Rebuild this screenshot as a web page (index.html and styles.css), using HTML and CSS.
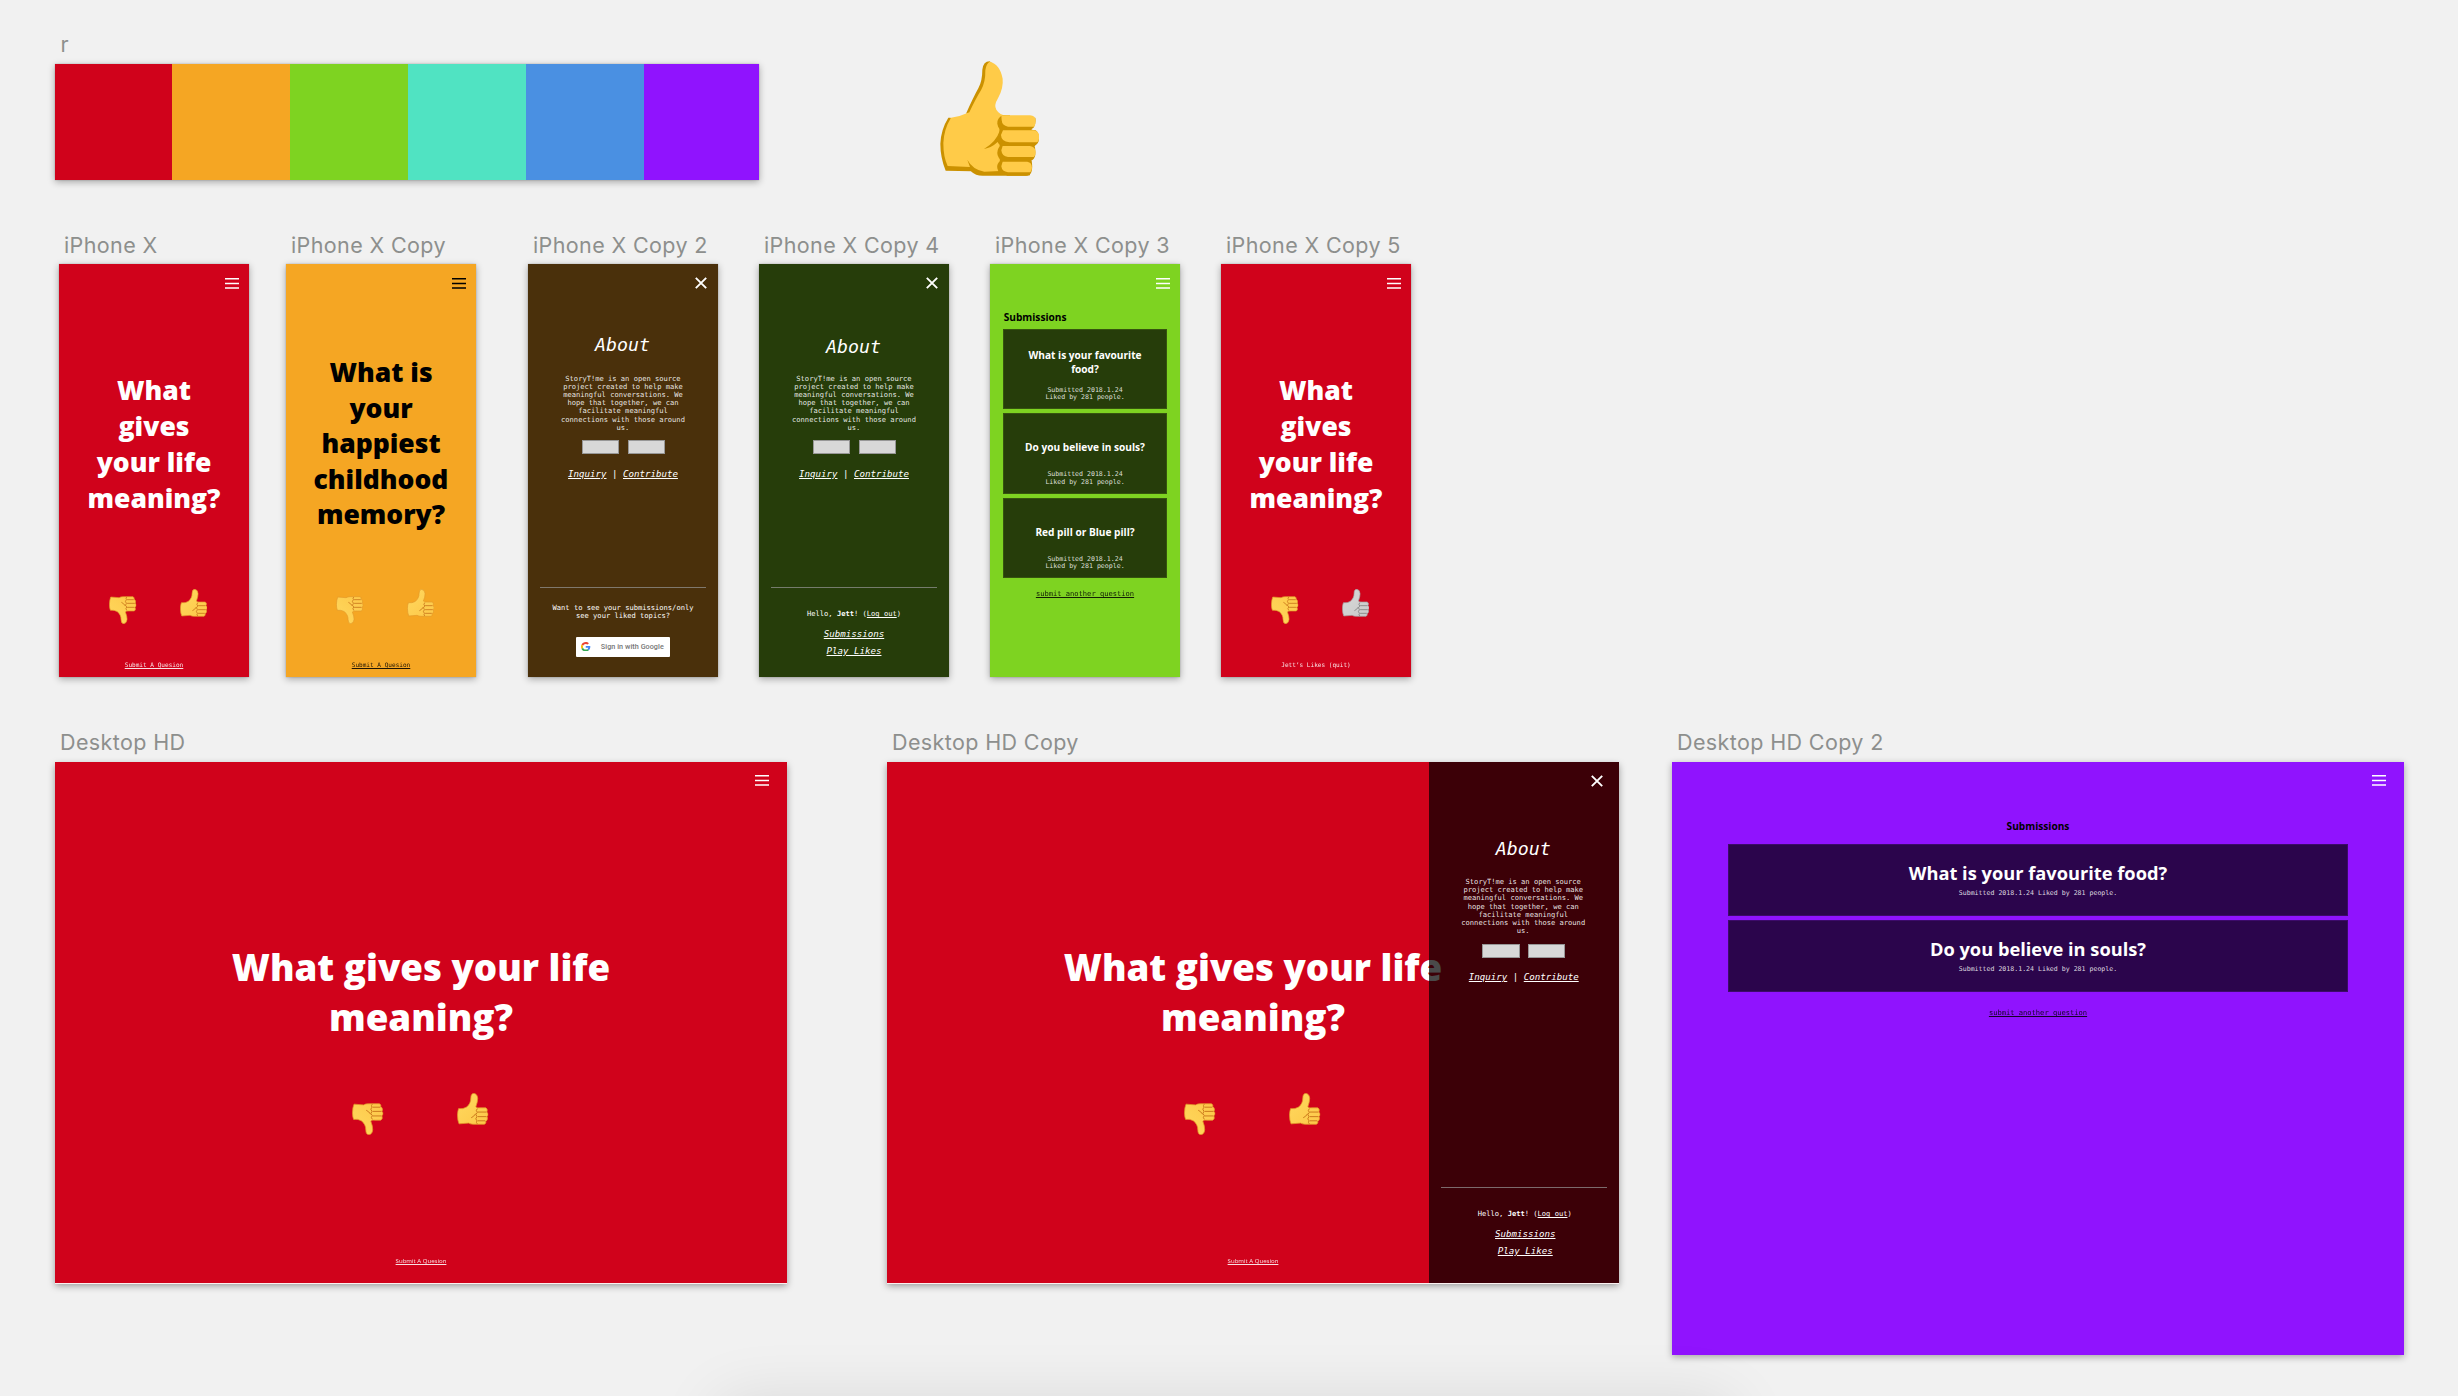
FILE: index.html
```html
<!DOCTYPE html>
<html lang="en">
<head>
<meta charset="utf-8">
<title>StoryT!me artboards</title>
<link rel="stylesheet" href="styles.css">
</head>
<body>
<svg class="defs" aria-hidden="true">
  <defs>
    <linearGradient id="skin" x1="0" y1="0" x2="1" y2="1">
      <stop offset="0" stop-color="#ffd95f"/><stop offset="1" stop-color="#fdc748"/>
    </linearGradient>
    <symbol id="menu" viewBox="0 0 14 11"><path d="M0 .8h14M0 5.4h14M0 10h14" fill="none" stroke="currentColor" stroke-width="1.5"/></symbol>
    <symbol id="close" viewBox="0 0 12 12"><path d="M.8.8l10.400 10.400M11.200.8L.8 11.200" fill="none" stroke="currentColor" stroke-width="1.9"/></symbol>
    <symbol id="thumb" viewBox="0 0 82 84">
      <path fill="url(#skin)" stroke="#e39a2a" stroke-width="2" d="M4 41Q15 43 25 37C32 30 36 24 36 13Q36 1 44 1Q53 2 54 14Q54 24 49 36Q51 40 60 39L75 39Q80 41 79 46Q79 49 77 50Q82 52 81 57Q81 61 78 62Q81 65 79 70Q78 73 75 74Q77 79 72 82L42 82Q35 82 30 79L5 81Q1 72 1 58Q1 48 4 41Z"/>
      <path fill="none" stroke="#c9761a" stroke-width="2.500" d="M54 50H76M54 62H77M54 73H74M53 41Q48 46 53 51Q46 56 52 62Q46 68 52 73Q49 78 53 81M49 54Q44 62 37 65"/>
    </symbol>
  </defs>
</svg>
<main class="canvas">

  <section class="item palette-item">
    <h2 class="label">r</h2>
    <div class="board palette">
      <i class="sw red"></i><i class="sw orange"></i><i class="sw lime"></i><i class="sw teal"></i><i class="sw blue"></i><i class="sw purple"></i>
    </div>
  </section>

  <svg class="item big-thumb" viewBox="0 0 298 346">
    <path fill="#cb9100" d="M127 26Q130 1 149 1L170 18L120 150L78 158Q101 107 115 82Q127 60 127 26ZM25 170L32 170L90 320L95 331L17 329Q1 290 1 248Q3 205 25 170Z"/>
    <path fill="#cb9100" d="M80 294L180 180H275V206L287 208Q297 215 297 232Q297 248 285 254L284 256Q287 262 286 282Q284 294 274 299L270 343L262 344H130Q84 345 80 294Z"/>
    <path fill="#ffcb48" d="M149 2Q180 9 188 53Q191 81 174 112Q161 133 169 146Q180 163 198 163L178 176L180 330L133 332Q98 326 82 296L90 318L23 315Q10 288 10 246Q12 204 33 170Q61 167 88 154Q108 112 123 88Q137 63 136 28Q139 7 149 2Z"/>
    <path fill="#cb9100" d="M188 163Q171 171 172 188Q173 199 181 206L178 212Q169 241 132 264Q155 260 173 243Q177 252 182 253Q169 267 173 283Q176 293 183 298Q169 308 172 322L177 336H210V163Z"/>
    <path fill="#cb9100" d="M200 170H286Q289 188 281 200L270 207H200ZM200 300H275Q279 322 274 334Q270 344 258 344H200Z"/>
    <path fill="#ffcb48" d="M184 163H270Q287 164 287 180Q287 191 283 197H204Q186 194 185 177ZM189 208H282Q298 211 298 228Q297 239 292 244H208Q184 242 183 222ZM188 255H270Q287 257 287 274Q287 282 282 288H204Q186 286 184 268ZM188 302H262Q276 304 276 320Q276 329 271 334H204Q186 332 184 316Z"/>
  </svg>

  <section class="item phone-a">
    <h2 class="label">iPhone X</h2>
    <div class="board phone red on-dark">
      <svg class="menu"><use href="#menu"/></svg>
      <p class="question">What<br>gives<br>your life<br>meaning?</p>
      <div class="votes"><svg class="thumb down"><use href="#thumb"/></svg><svg class="thumb"><use href="#thumb"/></svg></div>
      <a class="foot">Submit A Quesion</a>
    </div>
  </section>

  <section class="item phone-b">
    <h2 class="label">iPhone X Copy</h2>
    <div class="board phone orange on-light">
      <svg class="menu"><use href="#menu"/></svg>
      <p class="question five">What is<br>your<br>happiest<br>childhood<br>memory?</p>
      <div class="votes"><svg class="thumb down"><use href="#thumb"/></svg><svg class="thumb"><use href="#thumb"/></svg></div>
      <a class="foot">Submit A Quesion</a>
    </div>
  </section>

  <section class="item phone-c">
    <h2 class="label">iPhone X Copy 2</h2>
    <div class="board phone brown on-dark about">
      <svg class="close"><use href="#close"/></svg>
      <h3 class="about-title high">About</h3>
      <p class="about-text">StoryT!me is an open source<br>project created to help make<br>meaningful conversations. We<br>hope that together, we can<br>facilitate meaningful<br>connections with those around<br>us.</p>
      <div class="buttons"><span class="button"></span><span class="button"></span></div>
      <p class="links"><a>Inquiry</a> | <a>Contribute</a></p>
      <hr class="rule">
      <p class="prompt">Want to see your submissions/only<br>see your liked topics?</p>
      <div class="google">
        <svg class="google-mark" viewBox="0 0 48 48"><path fill="#EA4335" d="M24 9.500c3.500 0 6.700 1.200 9.200 3.600l6.900-6.900C35.900 2.400 30.500 0 24 0 14.600 0 6.500 5.400 2.600 13.200l8 6.200C12.400 13.700 17.700 9.500 24 9.500z"/><path fill="#4285F4" d="M47 24.500c0-1.600-.2-3.100-.4-4.500H24v9h12.900c-.6 3-2.300 5.500-4.800 7.200l7.700 6C44.400 38 47 31.800 47 24.500z"/><path fill="#FBBC05" d="M10.500 28.600c-.5-1.500-.8-3-.8-4.600s.3-3.100.8-4.600l-8-6.200C.9 16.500 0 20.100 0 24s.9 7.500 2.600 10.800z"/><path fill="#34A853" d="M24 48c6.500 0 11.900-2.100 15.900-5.800l-7.700-6c-2.200 1.500-4.900 2.300-8.200 2.300-6.300 0-11.600-4.200-13.500-9.900l-8 6.200C6.500 42.600 14.600 48 24 48z"/></svg>
        <span>Sign in with Google</span>
      </div>
    </div>
  </section>

  <section class="item phone-d">
    <h2 class="label">iPhone X Copy 4</h2>
    <div class="board phone forest on-dark about">
      <svg class="close"><use href="#close"/></svg>
      <h3 class="about-title">About</h3>
      <p class="about-text">StoryT!me is an open source<br>project created to help make<br>meaningful conversations. We<br>hope that together, we can<br>facilitate meaningful<br>connections with those around<br>us.</p>
      <div class="buttons"><span class="button"></span><span class="button"></span></div>
      <p class="links"><a>Inquiry</a> | <a>Contribute</a></p>
      <hr class="rule">
      <p class="hello">Hello, <b>Jett</b>! (<a>Log out</a>)</p>
      <a class="nav">Submissions</a>
      <a class="nav">Play Likes</a>
    </div>
  </section>

  <section class="item phone-e">
    <h2 class="label">iPhone X Copy 3</h2>
    <div class="board phone lime list">
      <svg class="menu"><use href="#menu"/></svg>
      <h3 class="list-title">Submissions</h3>
      <div class="cards">
        <article class="card"><h4>What is your favourite<br>food?</h4><p>Submitted 2018.1.24<br>Liked by 281 people.</p></article>
        <article class="card"><h4 class="single">Do you believe in souls?</h4><p>Submitted 2018.1.24<br>Liked by 281 people.</p></article>
        <article class="card"><h4 class="single">Red pill or Blue pill?</h4><p>Submitted 2018.1.24<br>Liked by 281 people.</p></article>
      </div>
      <a class="another">submit another question</a>
    </div>
  </section>

  <section class="item phone-f">
    <h2 class="label">iPhone X Copy 5</h2>
    <div class="board phone red on-dark">
      <svg class="menu"><use href="#menu"/></svg>
      <p class="question">What<br>gives<br>your life<br>meaning?</p>
      <div class="votes"><svg class="thumb down"><use href="#thumb"/></svg><svg class="thumb gray"><use href="#thumb"/></svg></div>
      <p class="foot plain">Jett’s Likes (quit)</p>
    </div>
  </section>

  <section class="item desk-a">
    <h2 class="label">Desktop HD</h2>
    <div class="board desktop red on-dark">
      <svg class="menu"><use href="#menu"/></svg>
      <p class="question">What gives your life<br>meaning?</p>
      <div class="votes"><svg class="thumb down"><use href="#thumb"/></svg><svg class="thumb"><use href="#thumb"/></svg></div>
      <a class="foot">Submit A Quesion</a>
    </div>
  </section>

  <section class="item desk-b">
    <h2 class="label">Desktop HD Copy</h2>
    <div class="board desktop red on-dark">
      <svg class="menu"><use href="#menu"/></svg>
      <p class="question">What gives your life<br>meaning?</p>
      <div class="votes"><svg class="thumb down"><use href="#thumb"/></svg><svg class="thumb"><use href="#thumb"/></svg></div>
      <a class="foot">Submit A Quesion</a>
      <aside class="drawer about">
        <svg class="close"><use href="#close"/></svg>
        <h3 class="about-title">About</h3>
        <p class="about-text">StoryT!me is an open source<br>project created to help make<br>meaningful conversations. We<br>hope that together, we can<br>facilitate meaningful<br>connections with those around<br>us.</p>
        <div class="buttons"><span class="button"></span><span class="button"></span></div>
        <p class="links"><a>Inquiry</a> | <a>Contribute</a></p>
        <hr class="rule">
        <p class="hello">Hello, <b>Jett</b>! (<a>Log out</a>)</p>
        <a class="nav">Submissions</a>
        <a class="nav">Play Likes</a>
      </aside>
    </div>
  </section>

  <section class="item desk-c">
    <h2 class="label">Desktop HD Copy 2</h2>
    <div class="board desktop tall purple list">
      <svg class="menu"><use href="#menu"/></svg>
      <h3 class="list-title">Submissions</h3>
      <div class="cards">
        <article class="card"><h4>What is your favourite food?</h4><p>Submitted 2018.1.24 Liked by 281 people.</p></article>
        <article class="card"><h4>Do you believe in souls?</h4><p>Submitted 2018.1.24 Liked by 281 people.</p></article>
      </div>
      <a class="another">submit another question</a>
    </div>
  </section>

  <div class="dock-shadow"></div>
</main>
</body>
</html>
```
FILE: styles.css
```css
* { box-sizing: border-box; }
body { margin: 0; background: #f1f1f1; }
h2, h3, h4, p { margin: 0; font-weight: 400; }
svg { display: block; flex: none; }
.defs { position: absolute; width: 0; height: 0; }

/* Free canvas: every artboard sits at its own spot */
.canvas { position: relative; width: 2458px; height: 1396px; overflow: hidden; }
.item { position: absolute; }
.palette-item { left: 54.500px; top: 29px; }
.big-thumb { left: 940px; top: 61px; width: 99.300px; height: 115.300px; }
.phone-a, .phone-b, .phone-c, .phone-d, .phone-e, .phone-f { top: 230.400px; }
.phone-a { left: 59px; }
.phone-b { left: 286px; }
.phone-c { left: 528px; }
.phone-d { left: 759px; }
.phone-e { left: 990px; }
.phone-f { left: 1221px; }
.desk-a, .desk-b, .desk-c { top: 727px; }
.desk-a { left: 55px; }
.desk-b { left: 887px; }
.desk-c { left: 1672px; }

.label {
  height: 34px;
  padding-left: 5px;
  font: 400 21.500px/30px Inter, sans-serif;
  letter-spacing: .38px;
  color: #8d8f8d;
  white-space: nowrap;
}
.palette-item .label { height: 35px; padding-left: 6px; }
.desk-a .label, .desk-b .label, .desk-c .label { height: 35px; }
.board {
  position: relative;
  display: flex;
  flex-direction: column;
  align-items: center;
  box-shadow: 0 2px 7px rgba(0, 0, 0, .32), 0 0 1px rgba(0, 0, 0, .3);
}
.phone { width: 190px; height: 412.600px; }
.desktop { width: 732px; height: 520.500px; box-shadow: 0 1px 0 #fbf0f0, 0 3px 7px rgba(0, 0, 0, .36); }
.desktop.tall { height: 593px; box-shadow: 0 2px 7px rgba(0, 0, 0, .32); }

.palette { flex-direction: row; width: 704px; height: 116px; align-items: stretch; }
.sw { width: 118px; }
.sw:first-child { width: 117.500px; }
.sw:last-child { flex: 1; }

.red { background: #d0021b; }
.orange { background: #f5a623; }
.lime { background: #7ed321; }
.teal { background: #50e3c2; }
.blue { background: #4a90e2; }
.purple { background: #9013fe; }
.brown { background: #4a300b; }
.forest { background: #263d0a; }
.on-dark, .list { color: #fff; }
.on-light { color: #000; }

.menu { align-self: flex-end; width: 14px; height: 11px; margin: 13.600px 10px 0 0; }
.close { align-self: flex-end; width: 12px; height: 12px; margin: 12.600px 11px 0 0; }

.question { font: 800 26.500px/36.100px "Open Sans", sans-serif; margin-top: 83px; height: 144.400px; text-align: center; white-space: nowrap; }
.question.five { line-height: 35.600px; margin-top: 66px; height: 178px; }
.votes { display: flex; align-self: flex-start; gap: 43px; margin: 72.600px 0 0 50px; height: 35px; }
.question.five + .votes { margin-top: 56px; }
.thumb { width: 27.500px; height: 28px; }
.thumb.down { margin-top: 7px; transform: scaleY(-1); }
.thumb.gray { filter: grayscale(1); }
.foot { font: 6.080px/8px "DejaVu Sans Mono", monospace; margin-top: 37px; text-decoration: underline; color: inherit; opacity: .88; }
.foot.plain { text-decoration: none; }

.desktop .menu { margin: 13px 18.500px 0 0; }
.desk-b .menu { visibility: hidden; }
.desktop .question { font-size: 36.700px; line-height: 49.700px; margin-top: 157px; height: 99.400px; }
.desktop .votes { margin: 50.600px 0 0 297px; gap: 73.500px; height: 42px; }
.desktop .thumb { width: 31.500px; height: 32px; }
.desktop .thumb.down { margin-top: 10px; }
.desktop .foot { font-family: "Open Sans", sans-serif; margin-top: 122.500px; }

.about { font-family: "DejaVu Sans Mono", monospace; text-align: center; white-space: nowrap; color: #fff; }
.about-title { font-size: 18.250px; font-style: italic; line-height: 22px; margin: 46.700px 1px 0 0; }
.about-title.high { margin: 44.700px 1px 2px 0; }
.about-text { font-size: 7.100px; line-height: 8.150px; margin-top: 17.200px; color: rgba(255, 255, 255, .9); }
.buttons { display: flex; gap: 8.500px; margin: 8px 0 0 1px; }
.button { width: 37.300px; height: 14.300px; background: #d8d8d8; border: 1px solid #979797; }
.links { font-size: 9.130px; font-style: italic; line-height: 12px; margin-top: 13.800px; }
.about a, .another { text-decoration: underline; }
.rule { width: 166.500px; height: 1px; margin: 107px 0 0; border: 0; background: #979797; opacity: .7; }
.prompt { font-size: 7.100px; line-height: 8.300px; margin-top: 15.500px; }
.hello { font-size: 7.100px; line-height: 8px; margin-top: 22px; }
.nav { font-size: 9.130px; font-style: italic; line-height: 12px; margin-top: 9.900px; }
.nav + .nav { margin-top: 4.900px; }
.google { display: flex; align-items: center; width: 94.300px; height: 20px; margin-top: 16.500px; padding-left: 5.500px; gap: 10px; background: #fff; border-radius: 1px; font: 500 7.200px/10px Roboto, sans-serif; letter-spacing: .06px; color: #757575; }
.google-mark { width: 9.500px; height: 9.500px; }

.drawer { position: absolute; top: 0; right: 0; width: 190.500px; height: 100%; display: flex; flex-direction: column; align-items: center; background: rgba(0, 0, 0, .71); }
.desktop .close { margin: 12.600px 16.500px 0 0; }
.drawer .about-title { margin-top: 51px; }
.drawer .about-text { margin-top: 18.500px; margin-right: 1px; }
.drawer .buttons { margin: 8.700px 0 0; }
.drawer .links { margin-top: 13.200px; }
.drawer .rule { margin-top: 204px; }
.drawer .hello { margin-left: 2px; }
.drawer .nav { margin-left: 3px; }

.list-title { align-self: flex-start; font: 700 10.140px/14px "Open Sans", sans-serif; color: #000; margin: 21.400px 0 0 13.700px; }
.cards { display: flex; flex-direction: column; gap: 4px; width: 164px; margin-top: 4.600px; }
.card { display: flex; flex-direction: column; align-items: center; height: 80.500px; background: #263d0a; border: 1px solid #36540f; text-align: center; white-space: nowrap; }
.card h4 { display: flex; flex-direction: column; justify-content: center; height: 27.600px; margin-top: 19px; font: 700 10.140px/13.800px "Open Sans", sans-serif; }
.card h4.single { padding-top: 2px; }
.card p { font: 6.590px/7.700px "DejaVu Sans Mono", monospace; margin-top: 10px; color: rgba(255, 255, 255, .85); }
.another { font: 7.100px/9px "DejaVu Sans Mono", monospace; color: #000; margin-top: 11px; opacity: .85; }

.desktop .list-title { align-self: center; margin: 33px 0 0; }
.desktop .cards { width: 620px; margin-top: 11px; gap: 4.500px; }
.desktop .card { height: 71.500px; background: #2b054c; border-color: #3d0a6a; }
.desktop .card h4 { font-size: 18.250px; line-height: 25px; height: 25px; margin-top: 14.700px; }
.desktop .card p { margin-top: 5.300px; }
.desktop .another { margin-top: 16.500px; }

.dock-shadow { position: absolute; left: 720px; top: 1402px; width: 1010px; height: 120px; box-shadow: 0 0 66px rgba(0, 0, 0, .11); }
```
